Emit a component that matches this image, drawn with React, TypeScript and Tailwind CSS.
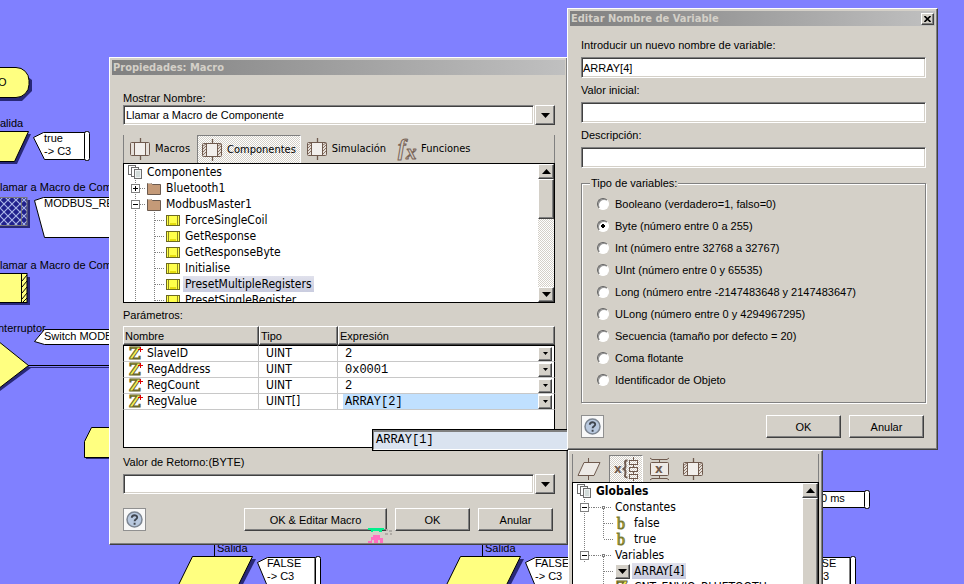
import { useState } from "react";
import type { ReactNode } from "react";

const raised =
  "border border-white border-r-[#404040] border-b-[#404040] bg-[#d4d0c8] shadow-[inset_-1px_-1px_0_#808080]";
const sunken =
  "border border-white border-t-[#808080] border-l-[#808080] bg-white shadow-[inset_1px_1px_0_#404040,inset_-1px_-1px_0_#d4d0c8]";
const dither =
  "bg-[conic-gradient(#fff_25%,#d4d0c8_0_50%,#fff_0_75%,#d4d0c8_0)] bg-[length:2px_2px]";
const tahoma = "font-['DejaVu_Sans_Condensed','DejaVu_Sans',sans-serif]";

const functions = [
  "ForceSingleCoil",
  "GetResponse",
  "GetResponseByte",
  "Initialise",
  "PresetMultipleRegisters",
  "PresetSingleRegister",
];

const params = [
  { name: "SlaveID", type: "UINT", value: "2" },
  { name: "RegAddress", type: "UINT", value: "0x0001" },
  { name: "RegCount", type: "UINT", value: "2" },
  { name: "RegValue", type: "UINT[]", value: "ARRAY[2]" },
];

const variableTypes = [
  "Booleano (verdadero=1, falso=0)",
  "Byte (número entre 0 a 255)",
  "Int (número entre 32768 a 32767)",
  "UInt (número entre 0 y 65535)",
  "Long (número entre -2147483648 y 2147483647)",
  "ULong (número entre 0 y 4294967295)",
  "Secuencia (tamaño por defecto = 20)",
  "Coma flotante",
  "Identificador de Objeto",
];

/* ---------- icons ---------- */

function Arrow({ up = false, small = false }: { up?: boolean; small?: boolean }) {
  return (
    <svg
      viewBox="0 0 9 5"
      className={small ? "h-[3px] w-[5px]" : "h-[5px] w-[9px]"}
      aria-hidden="true"
    >
      <path d={up ? "M0 5L4.500 0L9 5Z" : "M0 0H9L4.500 5Z"} />
    </svg>
  );
}

function MacroIcon({ hatched = false }: { hatched?: boolean }) {
  return (
    <svg width="22" height="24" viewBox="0 0 22 24" fill="none" stroke="#6f5a4e" aria-hidden="true">
      <path d="M10.500 1v4M10.500 19v4" strokeWidth="1.300" />
      <rect x="0.500" y="5.500" width="19" height="13" rx="1" fill="#e6e0da" />
      {hatched && (
        <path
          d="M1 8l3-2M1 11l3-3M1 14l3-3M1 17l3-3M16 8l3-2M16 11l3-3M16 14l3-3M16 17l3-3"
          stroke="#8a7466"
        />
      )}
      <rect x="4.500" y="5.500" width="11" height="13" fill="#f2efec" />
    </svg>
  );
}

function FxIcon() {
  return (
    <svg width="22" height="26" viewBox="0 0 22 26" aria-hidden="true">
      <g
        fill="#d4d0c8"
        stroke="#7a6558"
        fontFamily="Liberation Serif, serif"
        fontStyle="italic"
        fontWeight="bold"
      >
        <text x="2" y="19" fontSize="23">
          f
        </text>
        <text x="10" y="23" fontSize="21">
          x
        </text>
      </g>
    </svg>
  );
}

function PagesIcon() {
  return (
    <svg width="15" height="15" viewBox="0 0 15 15" fill="#fff" stroke="#6d6d6d" aria-hidden="true">
      <rect x="0.500" y="0.500" width="7" height="9" />
      <rect x="3.500" y="2.500" width="7" height="9" />
      <rect x="6.500" y="4.500" width="7" height="9" fill="#f0f3f3" />
      <path d="M8 7h4M8 9h4M8 11h4" stroke="#b5c4c0" />
    </svg>
  );
}

function FolderIcon() {
  return (
    <svg width="15" height="13" viewBox="0 0 15 13" aria-hidden="true">
      <path d="M0.500 12.500V1.500h4l1 1h8v10z" fill="#c49a78" stroke="#6b5a4e" />
      <path d="M1 1.500h3.500" stroke="#c8bfb6" />
    </svg>
  );
}

function FunctionIcon() {
  return (
    <svg width="15" height="11" viewBox="0 0 15 11" aria-hidden="true">
      <rect x="0.500" y="0.500" width="13" height="10" fill="#ffff4a" stroke="#6d6a20" />
      <path d="M2.500 1v9M11.500 1v9" stroke="#8e8b20" />
      <path d="M4 8.500h6M4 9.500h6" stroke="#e6de10" />
    </svg>
  );
}

function ZIcon({ plus = false }: { plus?: boolean }) {
  return (
    <svg width="15" height="15" viewBox="0 0 15 15" aria-hidden="true">
      <text
        x="1"
        y="13"
        fontSize="16"
        fontWeight="bold"
        fontFamily="DejaVu Serif, serif"
        fill="#f5ee55"
        stroke="#69682a"
      >
        Z
      </text>
      {plus && <path d="M10 3.500h5M12.500 1v5" stroke="#e00000" />}
    </svg>
  );
}

function BIcon() {
  return (
    <svg width="15" height="15" viewBox="0 0 15 15" aria-hidden="true">
      <text
        x="2"
        y="13"
        fontSize="16"
        fontFamily="Liberation Serif, serif"
        fill="#f5ee55"
        stroke="#7b7a30"
      >
        b
      </text>
    </svg>
  );
}

function InOutIcon() {
  return (
    <svg width="24" height="24" viewBox="0 0 24 24" fill="none" stroke="#6f5a4e" aria-hidden="true">
      <path d="M11.500 1v4M11.500 18v5" />
      <path d="M7 5.500H23L17 18.500H1z" fill="#eeeae6" />
    </svg>
  );
}

function VariablesIcon() {
  return (
    <svg width="25" height="24" viewBox="0 0 25 24" fill="none" stroke="#6f5a4e" aria-hidden="true">
      <g fill="#6f5a4e" stroke="none" fontFamily="DejaVu Sans, sans-serif" fontWeight="bold">
        <text x="0" y="16" fontSize="12">
          x
        </text>
      </g>
      <path
        d="M13.500 3.500C9.500 3.500 11.500 6 11.500 9C11.500 11 10.500 12 8.500 12C10.500 12 11.500 13 11.500 15C11.500 18 9.500 20.500 13.500 20.500"
        strokeWidth="2"
      />
      <path d="M19.500 0v3M19.500 7v3M19.500 14v3M19.500 21v3" />
      <rect x="15.500" y="3.500" width="8" height="4" />
      <rect x="15.500" y="10.500" width="8" height="4" />
      <rect x="15.500" y="17.500" width="8" height="4" />
    </svg>
  );
}

function ConstantsIcon() {
  return (
    <svg width="22" height="24" viewBox="0 0 22 24" fill="none" stroke="#6f5a4e" aria-hidden="true">
      <path d="M1 1l2 1.500h15l2-1.500M10.500 2.500v3M10.500 18.500v3M1 23l2-1.500h15l2 1.500" />
      <rect x="1.500" y="5.500" width="18" height="13" rx="1" fill="#eeeae6" />
      <text
        x="6"
        y="16"
        fontSize="12"
        fontWeight="bold"
        fill="#6f5a4e"
        stroke="none"
        fontFamily="DejaVu Sans, sans-serif"
      >
        x
      </text>
    </svg>
  );
}

function HelpButton() {
  return (
    <button
      type="button"
      aria-label="Ayuda"
      className="flex h-[23px] w-[23px] items-center justify-center border border-[#909090] bg-[#f8f8f8]"
    >
      <svg width="17" height="17" viewBox="0 0 17 17" aria-hidden="true">
        <circle cx="8.500" cy="8.500" r="7.500" fill="#b9c9df" stroke="#7c8591" strokeWidth="1.500" />
        <path
          d="M5.800 6.700C5.800 3.400 11.200 3.400 11.200 6.500C11.200 8.300 8.600 8.300 8.600 10.300M8.600 11.800v1.900"
          fill="none"
          stroke="#40464f"
          strokeWidth="1.900"
        />
      </svg>
    </button>
  );
}

/* ---------- shared controls ---------- */

function PushButton({ children, wide = false }: { children: ReactNode; wide?: boolean }) {
  return (
    <button
      type="button"
      className={`h-[23px] text-center ${raised} ${wide ? "w-[143px]" : "w-[75px]"}`}
    >
      {children}
    </button>
  );
}

function ComboBox({ id, options }: { id: string; options: string[] }) {
  return (
    <div className="flex h-5 gap-px">
      <select
        id={id}
        className={`min-w-0 flex-1 appearance-none rounded-none px-0.5 outline-none ${sunken}`}
      >
        {options.map((option) => (
          <option key={option}>{option}</option>
        ))}
      </select>
      <span className={`flex w-5 items-center justify-center ${raised}`}>
        <Arrow />
      </span>
    </div>
  );
}

function TitleBar({ children, onClose }: { children: ReactNode; onClose?: () => void }) {
  return (
    <div
      className={`flex h-[15px] items-center justify-between bg-linear-to-r from-[#808080] to-[#c0c0c0] px-px font-bold text-[#d4d0c8] ${tahoma}`}
    >
      <h2>{children}</h2>
      {onClose && (
        <button
          type="button"
          aria-label="Cerrar"
          onClick={onClose}
          className={`flex h-3 w-[13px] items-center justify-center ${raised}`}
        >
          <svg width="7" height="6" viewBox="0 0 7 6" stroke="#000" strokeWidth="1.600" aria-hidden="true">
            <path d="M0.500 0L6.500 6M6.500 0L0.500 6" />
          </svg>
        </button>
      )}
    </div>
  );
}

function ScrollBar({ thumb }: { thumb: string }) {
  return (
    <div className={`flex w-4 shrink-0 flex-col ${dither}`}>
      <span className={`flex h-[15px] shrink-0 items-center justify-center ${raised}`}>
        <Arrow up />
      </span>
      <span className={`${raised} ${thumb}`} />
      <span className={`mt-auto flex h-[15px] shrink-0 items-center justify-center ${raised}`}>
        <Arrow />
      </span>
    </div>
  );
}

/* ---------- tree pieces, each 19px wide ---------- */

function Expander({ open }: { open: boolean }) {
  return (
    <svg
      className="shrink-0"
      width="19"
      height="16"
      viewBox="0 0 19 16"
      fill="none"
      stroke="#808080"
      shapeRendering="crispEdges"
      aria-hidden="true"
    >
      <path d="M9.500 0V16M14 8.500H19" strokeDasharray="1 1" />
      <rect x="5.500" y="4.500" width="8" height="8" fill="#fff" />
      <path d={open ? "M7 8.500h5" : "M7 8.500h5M9.500 6v5"} stroke="#000" />
    </svg>
  );
}

function Guide({ branch = false, last = false, node = false, empty = false }) {
  let d = "M9.500 0V16";
  if (branch) d = last ? "M9.500 0V8M9.500 8.500H19" : "M9.500 0V16M9.500 8.500H19";
  if (node) d = "M0 8.500H17M9.500 10V16";
  return (
    <svg
      className="shrink-0"
      width="19"
      height="16"
      viewBox="0 0 19 16"
      fill="none"
      stroke="#808080"
      shapeRendering="crispEdges"
      aria-hidden="true"
    >
      {!empty && <path d={d} strokeDasharray="1 1" />}
      {node && <rect x="8.500" y="7.500" width="2" height="2" fill="#fff" />}
    </svg>
  );
}

function TreeItem({
  guides,
  icon,
  label,
  selected = false,
  bold = false,
}: {
  guides?: ReactNode;
  icon?: ReactNode;
  label: string;
  selected?: boolean;
  bold?: boolean;
}) {
  return (
    <li className="flex h-4 items-center whitespace-nowrap">
      {guides}
      {icon && <span className="ml-0.5 flex w-[17px] shrink-0 items-center">{icon}</span>}
      <span
        className={`px-0.5 leading-4 ${selected ? "bg-linear-to-b from-[#e0e1ec] to-[#c9ccdf]" : ""} ${bold ? "font-bold" : ""}`}
      >
        {label}
      </span>
    </li>
  );
}

/* ---------- flowchart behind the windows ---------- */

function OutputNode({ x }: { x: number }) {
  return (
    <g transform={`translate(${x} 0)`}>
      <path d="M214.500 540V556" stroke="#000" />
      <path d="M195 559H256L240 590H180Z" fill="#282878" />
      <path d="M192.500 556.500H252.500L236 590H176Z" fill="#ffff80" stroke="#000" />
      <path d="M257.500 562.500L267.500 557.500H315V590H269Z" fill="#fff" stroke="#000" />
      <rect x="315.500" y="556.500" width="5" height="40" rx="2" fill="#fff" stroke="#000" />
      <text x="217" y="552">
        Salida
      </text>
      <text x="267" y="567">
        FALSE
      </text>
      <text x="267" y="580">
        -&gt; C3
      </text>
    </g>
  );
}

function Flowchart() {
  return (
    <svg className="absolute inset-0 h-full w-full text-[11px]" aria-label="Diagrama de flujo">
      <defs>
        <pattern id="mesh" width="8" height="8" patternUnits="userSpaceOnUse">
          <rect width="8" height="8" fill="#20208c" />
          <path d="M0 0L8 8M8 0L0 8" stroke="#a9b4e8" strokeWidth="1.200" />
        </pattern>
      </defs>

      <path d="M0 70H19L32 80V91L22 101H0Z" fill="#282878" />
      <rect x="-40" y="67.500" width="69" height="30" rx="13" fill="#ffff80" stroke="#000" />
      <text x="-2" y="86">
        O
      </text>

      <text x="0" y="127">
        alida
      </text>
      <path d="M0 134H31L17 164H0Z" fill="#282878" />
      <path d="M-20 131.500H28.500L14.500 161.500H-20Z" fill="#ffff80" stroke="#000" />
      <path d="M33.500 137.500L43.500 132.500H85V159.500H44.500Z" fill="#fff" stroke="#000" />
      <rect x="84.500" y="131.500" width="5" height="29" rx="2" fill="#fff" stroke="#000" />
      <text x="44" y="142">
        true
      </text>
      <text x="44" y="155">
        -&gt; C3
      </text>

      <text x="0" y="191">
        lamar a Macro de Componente
      </text>
      <path d="M0 200H30V228H0Z" fill="#282878" />
      <rect x="-5" y="197.500" width="32" height="28" fill="url(#mesh)" stroke="#77777a" />
      <path d="M21.500 198V225" stroke="#77777a" />
      <path d="M34.500 200.500L43.500 197.500H140V237.500H44.500Z" fill="#fff" stroke="#000" />
      <text x="44" y="207">
        MODBUS_READ
      </text>

      <text x="0" y="269">
        lamar a Macro de Componente
      </text>
      <path d="M0 277H30V305H0Z" fill="#282878" />
      <rect x="-5" y="273.500" width="32" height="29" fill="#ffff80" stroke="#000" />
      <path
        d="M21.500 274V302M22 281l5-6M22 287l5-6M22 293l5-6M22 299l5-6M23 302l4-4"
        stroke="#000"
      />

      <text x="-2" y="332">
        nterruptor
      </text>
      <path d="M34.500 341.500L44.500 329.500H140V344.500H44.500Z" fill="#fff" stroke="#000" />
      <text x="44" y="340">
        Switch MODBUS
      </text>
      <path d="M0 345L31 368L0 391Z" fill="#282878" />
      <path d="M29 367.500H120" stroke="#282878" />
      <path d="M-2 341L28.500 365.500L-2 389Z" fill="#ffff80" stroke="#000" />
      <path d="M28 365.500H120" stroke="#000" />

      <path d="M86 441H120V459H86Z" fill="#282878" />
      <path d="M91.500 427.500H120V457.500H84.500V441.500Z" fill="#ffff80" stroke="#000" />

      <OutputNode x={0} />
      <OutputNode x={268} />
      <OutputNode x={535} />

      <rect x="780" y="491.500" width="86" height="16" fill="#fff" stroke="#000" />
      <rect x="864.500" y="490.500" width="5" height="18" rx="2" fill="#fff" stroke="#000" />
      <text x="821" y="502">
        0 ms
      </text>
    </svg>
  );
}

/* ---------- windows ---------- */

function Tab({
  icon,
  label,
  active = false,
}: {
  icon: ReactNode;
  label: string;
  active?: boolean;
}) {
  return (
    <button
      type="button"
      role="tab"
      aria-selected={active}
      className={`flex items-center gap-[3px] ${
        active
          ? `ml-[3px] border-x border-t border-[#808080] border-r-white px-1 ${dither}`
          : "pr-1 pl-1.5"
      }`}
    >
      {icon}
      {label}
    </button>
  );
}

function MacroWindow() {
  return (
    <section className={`absolute top-[57px] left-[109px] w-[459px] p-0.5 ${raised}`}>
      <TitleBar>Propiedades: Macro</TitleBar>
      <div className="pt-4 pr-2.5 pb-[11px] pl-[11px]">
        <label htmlFor="display-name" className="block">
          Mostrar Nombre:
        </label>
        <ComboBox id="display-name" options={["Llamar a Macro de Componente"]} />

        <div
          role="tablist"
          className={`mt-2.5 flex h-7 border-x border-[#808080] ${tahoma}`}
        >
          <Tab icon={<MacroIcon />} label="Macros" />
          <Tab icon={<MacroIcon hatched />} label="Componentes" active />
          <Tab icon={<MacroIcon hatched />} label="Simulación" />
          <Tab icon={<FxIcon />} label="Funciones" />
        </div>
        <div className="flex h-[140px] overflow-hidden border border-black bg-white">
          <ul className={`min-w-0 flex-1 overflow-hidden pl-0.5 text-xs ${tahoma}`}>
            <TreeItem icon={<PagesIcon />} label="Componentes" />
            <TreeItem
              guides={<Expander open={false} />}
              icon={<FolderIcon />}
              label="Bluetooth1"
            />
            <TreeItem guides={<Expander open />} icon={<FolderIcon />} label="ModbusMaster1" />
            {functions.map((name) => (
              <TreeItem
                key={name}
                guides={
                  <>
                    <Guide />
                    <Guide branch />
                  </>
                }
                icon={<FunctionIcon />}
                label={name}
                selected={name === "PresetMultipleRegisters"}
              />
            ))}
          </ul>
          <ScrollBar thumb="h-10" />
        </div>

        <h3 className="mt-[5px] mb-1">Parámetros:</h3>
        <div className="relative">
          <table className="w-full table-fixed border-separate border-spacing-0">
            <thead>
              <tr className="h-[19px] text-left">
                <th className={`w-[136px] p-0 px-px font-normal ${raised}`}>Nombre</th>
                <th className={`w-[79px] p-0 px-px font-normal ${raised}`}>Tipo</th>
                <th className={`p-0 px-px font-normal ${raised}`}>Expresión</th>
              </tr>
            </thead>
            <tbody className={`bg-white text-xs leading-[15px] ${tahoma}`}>
              {params.map((param) => (
                <tr key={param.name} className="group">
                  <td className="border-r border-b border-l border-r-[#c8c8c8] border-b-[#c8c8c8] border-l-black p-0 group-first:border-t group-first:border-t-black">
                    <span className="flex h-[15px] items-center gap-1 pl-1">
                      <ZIcon plus />
                      {param.name}
                    </span>
                  </td>
                  <td className="border-r border-b border-[#c8c8c8] p-0 pl-[7px] group-first:border-t group-first:border-t-black">
                    {param.type}
                  </td>
                  <td className="border-r border-b border-r-black border-b-[#c8c8c8] p-0 pr-0.5 pl-[5px] group-first:border-t group-first:border-t-black">
                    <span className="flex h-[15px] items-center">
                      <input
                        aria-label={`Expresión de ${param.name}`}
                        defaultValue={param.value}
                        className={`h-[15px] min-w-0 flex-1 px-0.5 pt-0.5 font-['Liberation_Mono',monospace] outline-none ${
                          param.name === "RegValue" ? "bg-[#c0e0ff]" : ""
                        }`}
                      />
                      <button
                        type="button"
                        aria-label={`Elegir ${param.name}`}
                        className={`flex h-3.5 w-3.5 items-center justify-center ${raised}`}
                      >
                        <Arrow small />
                      </button>
                    </span>
                  </td>
                </tr>
              ))}
            </tbody>
          </table>
          <div className="h-[38px] border-x border-b border-black bg-white" />

          {/* drop-down list open over the grid */}
          <div className="absolute top-[103px] left-[249px] w-[196px] border border-r-0 border-black bg-white font-['Liberation_Mono',monospace] text-xs">
            <div className="border border-t-2 border-[#808080] border-r-white border-b-white bg-[#dae3f0] px-0.5 leading-[17px]">
              ARRAY[1]
            </div>
          </div>
        </div>

        <label htmlFor="return-value" className="mt-[7px] mb-[5px] block">
          Valor de Retorno:(BYTE)
        </label>
        <ComboBox id="return-value" options={[""]} />

        <div className="mt-3.5 flex gap-2 pr-0.5">
          <div className="flex-1">
            <HelpButton />
          </div>
          <PushButton wide>OK &amp; Editar Macro</PushButton>
          <PushButton>OK</PushButton>
          <PushButton>Anular</PushButton>
        </div>
      </div>

      {/* drag cursor remains */}
      <svg
        className="absolute bottom-0 left-[258px]"
        width="26"
        height="17"
        viewBox="0 0 26 17"
        aria-hidden="true"
      >
        <path d="M0 1h16v2h-2v2h-3v-1H5v1H3V3H0z" fill="#00f08c" />
        <path d="M5 8h7v3h3v5h-3v-3h-2v3H6v-3H4v3H0v-2h3v-4h2z" fill="#ff70c0" />
        <path d="M18 2h2v2h-2zM21 3h3v2h-3zM17 6h3v2h-3zM22 6h2v2h-2z" fill="#b0aca6" />
      </svg>
    </section>
  );
}

function TextField({ id, label, value }: { id: string; label: string; value: string }) {
  return (
    <div className="flex flex-col gap-[5px]">
      <label htmlFor={id}>{label}</label>
      <input
        id={id}
        type="text"
        defaultValue={value}
        className={`h-[21px] w-full px-px outline-none ${sunken}`}
      />
    </div>
  );
}

function VariableWindow({ onClose }: { onClose: () => void }) {
  const [type, setType] = useState(variableTypes[1]);

  return (
    <section className={`absolute top-2 left-[567px] w-[371px] p-0.5 ${raised}`}>
      <TitleBar onClose={onClose}>Editar Nombre de Variable</TitleBar>
      <div className="pt-3 pr-[9px] pb-[9px] pl-[11px]">
        <div className="flex flex-col gap-[5px]">
          <TextField
            id="variable-name"
            label="Introducir un nuevo nombre de variable:"
            value="ARRAY[4]"
          />
          <TextField id="initial-value" label="Valor inicial:" value="" />
          <TextField id="description" label="Descripción:" value="" />
        </div>

        <fieldset className="mt-2 border border-[#808080] px-2 pt-[3px] pb-[11px] shadow-[1px_1px_0_#fff,inset_1px_1px_0_#fff]">
          <legend className="bg-[#d4d0c8] px-px">Tipo de variables:</legend>
          {variableTypes.map((option) => (
            <label key={option} className="flex h-[22px] items-center gap-1.5 pl-[7px]">
              <input
                type="radio"
                name="variable-type"
                checked={type === option}
                onChange={() => setType(option)}
                className="h-3 w-3 appearance-none rounded-full border border-[#606060] border-r-white border-b-white bg-white shadow-[inset_1px_1px_0_#909090] checked:bg-[radial-gradient(circle,#000_2px,#fff_2px)]"
              />
              {option}
            </label>
          ))}
        </fieldset>

        <div className="mt-3 flex gap-2 pr-0.5">
          <div className="flex-1">
            <HelpButton />
          </div>
          <PushButton>OK</PushButton>
          <PushButton>Anular</PushButton>
        </div>
      </div>
    </section>
  );
}

function ExplorerWindow() {
  return (
    <section className={`absolute top-[450px] left-[568px] w-[255px] p-[3px] ${raised}`}>
      <div className="flex h-7 items-end border-x border-[#808080] px-1">
        <button type="button" aria-label="Puertos" className="flex h-[27px] w-8 items-center">
          <InOutIcon />
        </button>
        <button
          type="button"
          aria-label="Variables"
          className={`flex h-[27px] w-[34px] items-center justify-center border border-b-0 border-[#808080] border-r-white ${dither}`}
        >
          <VariablesIcon />
        </button>
        <button
          type="button"
          aria-label="Macros"
          className="flex h-[27px] w-[34px] items-center justify-center"
        >
          <ConstantsIcon />
        </button>
        <button
          type="button"
          aria-label="Componentes"
          className="flex h-[27px] w-[34px] items-center justify-center"
        >
          <MacroIcon hatched />
        </button>
      </div>
      <div className="flex h-[140px] overflow-hidden border border-black bg-white">
        <ul className={`min-w-0 flex-1 overflow-hidden pl-0.5 text-xs ${tahoma}`}>
          <TreeItem icon={<PagesIcon />} label="Globales" bold />
          <TreeItem
            guides={
              <>
                <Expander open />
                <Guide node />
              </>
            }
            label="Constantes"
          />
          <TreeItem
            guides={
              <>
                <Guide />
                <Guide branch />
              </>
            }
            icon={<BIcon />}
            label="false"
          />
          <TreeItem
            guides={
              <>
                <Guide />
                <Guide branch last />
              </>
            }
            icon={<BIcon />}
            label="true"
          />
          <TreeItem
            guides={
              <>
                <Expander open />
                <Guide node />
              </>
            }
            label="Variables"
          />
          <TreeItem
            guides={
              <>
                <Guide empty />
                <Guide branch />
              </>
            }
            icon={
              <button
                type="button"
                aria-label="Menú de ARRAY[4]"
                className={`flex h-[15px] w-[15px] items-center justify-center ${raised}`}
              >
                <Arrow />
              </button>
            }
            label="ARRAY[4]"
            selected
          />
          <TreeItem
            guides={
              <>
                <Guide empty />
                <Guide branch />
              </>
            }
            icon={<ZIcon />}
            label="CNT_ENVIO_BLUETOOTH"
          />
        </ul>
        <ScrollBar thumb="h-24" />
      </div>
    </section>
  );
}

export default function App() {
  const [editing, setEditing] = useState(true);

  return (
    <main className="relative h-screen w-full overflow-hidden bg-[#8080ff] font-['Liberation_Sans',Arial,sans-serif] text-[11px] leading-[14px] text-black">
      <Flowchart />
      <MacroWindow />
      <ExplorerWindow />
      {editing && <VariableWindow onClose={() => setEditing(false)} />}
    </main>
  );
}
